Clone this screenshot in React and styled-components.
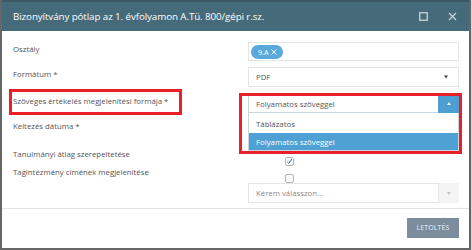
import React from "react";
import styled, { createGlobalStyle } from "styled-components";

const Global = createGlobalStyle`
  html, body { margin: 0; padding: 0; background: #d6d6d6; }
  body { font-family: "Open Sans", "Noto Sans", sans-serif; }
  * { box-sizing: border-box; }
`;

const Dialog = styled.div`
  width: 471px;
  height: 250px;
  background: #fff;
  border: 2px solid #666;
  border-top: none;
  display: flex;
  flex-direction: column;
`;

const Header = styled.div`
  height: 31px;
  flex: none;
  background: #456a79;
  border-top: 2px solid #3a5866;
  display: flex;
  align-items: center;
  padding: 0 12px 0 11px;
  color: #fff;
`;

const Title = styled.div`
  flex: 1;
  font-size: 9.8px;
  letter-spacing: -0.1px;
`;

const HeaderIcons = styled.div`
  display: flex;
  gap: 20px;
  align-items: center;
  color: #c9d6dc;
`;

const Body = styled.div`
  flex: 1;
  padding: 11px 8px 0 11px;
  position: relative;
`;

const Row = styled.div`
  display: flex;
  align-items: flex-start;
  height: ${(p) => p.$h || 20}px;
  margin-bottom: ${(p) => p.$mb ?? 6}px;
`;

const Label = styled.div`
  width: 235px;
  flex: none;
  font-size: 7.8px;
  color: #555;
  padding-top: ${(p) => p.$pt ?? 2}px;
  position: relative;
`;

const Highlight = styled.span`
  position: relative;
  &::after {
    content: "";
    position: absolute;
    left: -4px;
    right: -14px;
    top: -7px;
    bottom: -9px;
    border: 3px solid #e8202a;
  }
`;

const Field = styled.div`
  width: 211px;
  height: 100%;
  position: relative;
`;

const Box = styled.div`
  height: 100%;
  border: 1px solid ${(p) => (p.$open ? "#c9d6e0" : "#e1e6ea")};
  background: #fff;
  display: flex;
  align-items: center;
  padding-left: ${(p) => p.$pl ?? 7}px;
  font-size: 7.8px;
  color: ${(p) => (p.$muted ? "#8a8a8a" : "#555")};
  position: relative;
`;

const Chip = styled.span`
  background: #5aa9dc;
  color: #fff;
  border-radius: 8px;
  font-size: 7.2px;
  height: 14px;
  padding: 0 6px 0 7px;
  display: inline-flex;
  align-items: center;
  gap: 2px;
  margin-left: -5px;
`;

const Caret = styled.span`
  position: absolute;
  right: 10px;
  top: 50%;
  transform: translateY(-50%);
  width: 0;
  height: 0;
  border-left: 2.5px solid transparent;
  border-right: 2.5px solid transparent;
  border-top: 3px solid #444;
`;

const CaretButton = styled.span`
  position: absolute;
  right: -1px;
  top: -1px;
  bottom: -1px;
  width: 21px;
  background: ${(p) => (p.$blue ? "#4d9fd1" : "#f4f4f4")};
  border-left: 1px solid ${(p) => (p.$blue ? "#4d9fd1" : "#e6e6e6")};
  display: flex;
  align-items: center;
  justify-content: center;
`;

const Tri = styled.span`
  width: 0;
  height: 0;
  border-left: 2.5px solid transparent;
  border-right: 2.5px solid transparent;
  ${(p) => (p.$up ? `border-bottom: 3px solid #e8f3fb;` : `border-top: 3px solid #c4c4c4;`)}
`;

const SelectFrame = styled.div`
  position: absolute;
  left: -9px;
  right: -3px;
  top: -1px;
  height: 61px;
  border: 3px solid #e8202a;
  pointer-events: none;
  z-index: 3;
`;

const Menu = styled.div`
  position: absolute;
  left: 0;
  right: 0;
  top: 100%;
  background: #fff;
  border: 1px solid #c9d6e0;
  border-top: none;
  z-index: 2;
  padding-top: 1px;
`;

const Option = styled.div`
  height: ${(p) => (p.$active ? 17 : 19)}px;
  display: flex;
  align-items: center;
  padding-left: 7px;
  font-size: 7.8px;
  color: ${(p) => (p.$active ? "#fff" : "#555")};
  background: ${(p) => (p.$active ? "#4fa0d3" : "#fff")};
`;

const Check = styled.span`
  display: inline-flex;
  align-items: center;
  justify-content: center;
  width: 9px;
  height: 9px;
  border: 1px solid #b5b5b5;
  border-radius: 2px;
  background: #fafafa;
  margin-left: 37px;
  margin-top: -1px;
`;

const Footer = styled.div`
  height: 40px;
  flex: none;
  border-top: 1px solid #e2e2e2;
  display: flex;
  align-items: center;
  justify-content: flex-end;
  padding: 0 10px 2px 0;
`;

const Button = styled.button`
  height: 20px;
  width: 52px;
  border: none;
  background: #7b8c9c;
  color: #eef3f7;
  font-family: "Open Sans", sans-serif;
  font-size: 7px;
  letter-spacing: 0.1px;
  padding: 0;
`;

export default function App() {
  return (
    <>
      <Global />
      <Dialog>
        <Header>
          <Title>Bizonyítvány pótlap az 1. évfolyamon A.Tü. 800/gépi r.sz.</Title>
          <HeaderIcons>
            <svg width="9" height="9" viewBox="0 0 9 9">
              <rect x="0.75" y="0.75" width="7.5" height="7.5" fill="none" stroke="#c9d6dc" strokeWidth="1.3" />
            </svg>
            <svg width="9" height="9" viewBox="0 0 9 9">
              <path d="M1 1 L8 8 M8 1 L1 8" stroke="#c9d6dc" strokeWidth="1.2" />
            </svg>
          </HeaderIcons>
        </Header>
        <Body>
          <Row $h={19} $mb={6}>
            <Label>Osztály</Label>
            <Field>
              <Box>
                <Chip>
                  9.A
                  <svg width="6" height="6" viewBox="0 0 6 6">
                    <path d="M0.5 0.5 L5.5 5.5 M5.5 0.5 L0.5 5.5" stroke="#fff" strokeWidth="0.9" />
                  </svg>
                </Chip>
              </Box>
            </Field>
          </Row>
          <Row $h={20} $mb={7}>
            <Label>Formátum *</Label>
            <Field>
              <Box>
                PDF
                <Caret />
              </Box>
            </Field>
          </Row>
          <Row $h={19} $mb={6}>
            <Label>
              <Highlight>Szöveges értékelés megjelenítési formája *</Highlight>
            </Label>
            <Field>
              <Box $open>
                Folyamatos szöveggel
                <CaretButton $blue>
                  <Tri $up />
                </CaretButton>
              </Box>
              <Menu>
                <Option>Táblázatos</Option>
                <Option $active>Folyamatos szöveggel</Option>
              </Menu>
              <SelectFrame />
            </Field>
          </Row>
          <Row $h={20} $mb={9}>
            <Label>Keltezés dátuma *</Label>
            <Field />
          </Row>
          <Row $h={13} $mb={5}>
            <Label $pt={1}>Tanulmányi átlag szerepeltetése</Label>
            <Field>
              <Check>
                <svg width="7" height="7" viewBox="0 0 7 7">
                  <path d="M1.2 3.8 L2.8 5.4 L5.8 1" fill="none" stroke="#3d6f9a" strokeWidth="1" />
                </svg>
              </Check>
            </Field>
          </Row>
          <Row $h={13} $mb={4}>
            <Label $pt={1}>Tagintézmény címének megjelenítése</Label>
            <Field>
              <Check />
            </Field>
          </Row>
          <Row $h={20} $mb={0}>
            <Label />
            <Field>
              <Box $muted $pl={7}>
                Kérem válasszon...
                <CaretButton>
                  <Tri />
                </CaretButton>
              </Box>
            </Field>
          </Row>
        </Body>
        <Footer>
          <Button>LETOLTÉS</Button>
        </Footer>
      </Dialog>
    </>
  );
}
